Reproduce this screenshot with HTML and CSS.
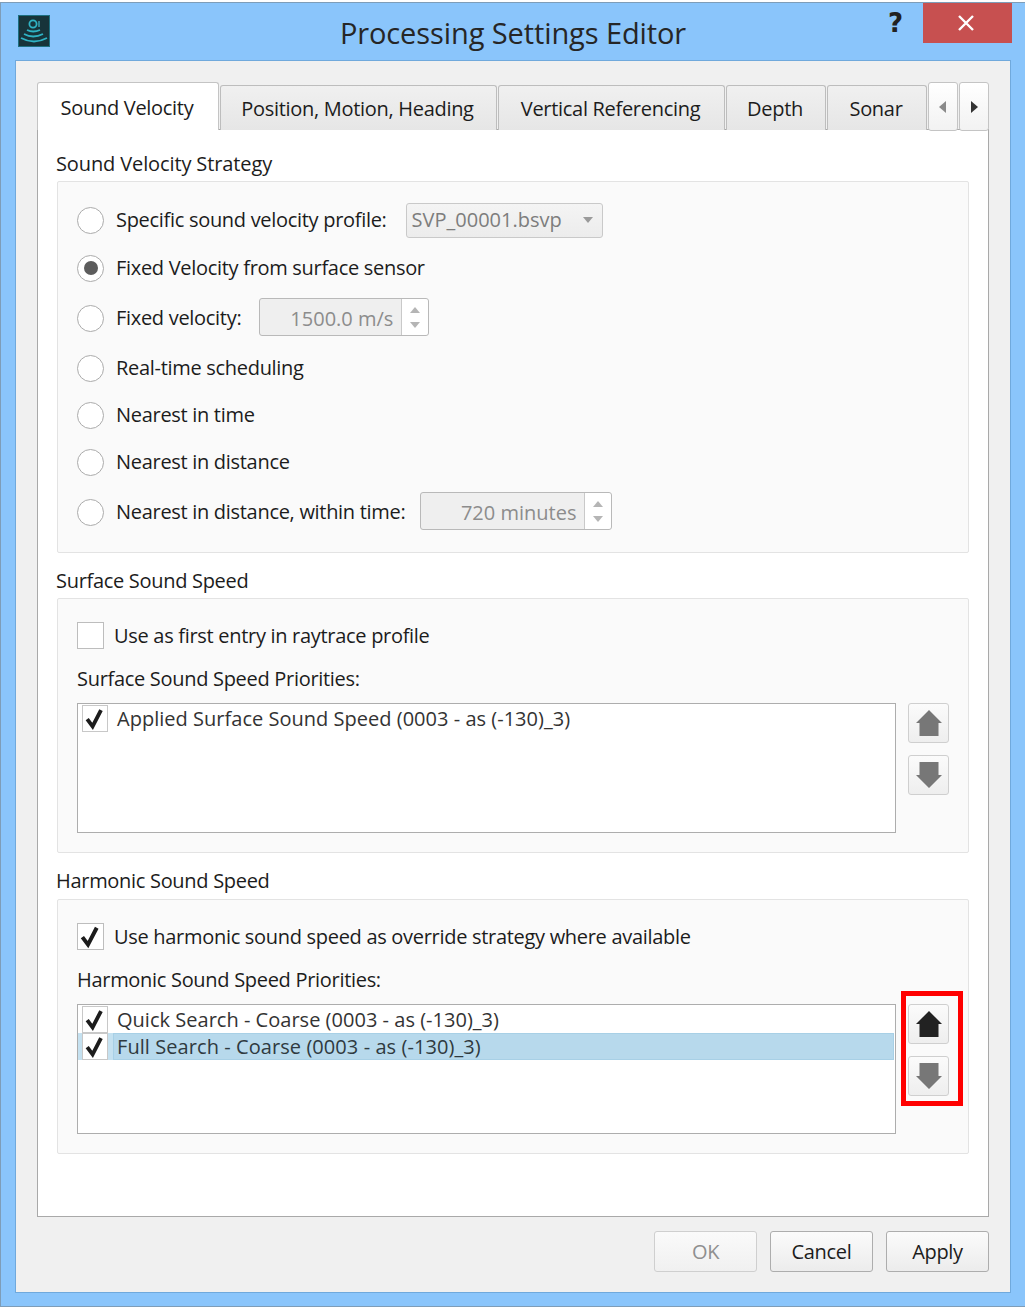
FILE: index.html
```html
<!DOCTYPE html>
<html lang="en">
<head>
<meta charset="utf-8">
<title>Processing Settings Editor</title>
<link rel="stylesheet" href="styles.css">
</head>
<body>
<div class="window">
  <header class="titlebar">
    <svg class="app-icon" viewBox="0 0 32 32" aria-hidden="true">
      <rect x="0.5" y="0.5" width="31" height="31" fill="#17343a" stroke="#1d6f80"/>
      <circle cx="15" cy="9" r="3.6" fill="none" stroke="#2fb3c4" stroke-width="1.8"/>
      <path d="M21 6v6" stroke="#2f8794" stroke-width="2"/>
      <path d="M9 15q6 3 13 0M6 19q9 5 19 0M3 23q13 7 26 0" fill="none" stroke="#2fb3c4" stroke-width="1.8"/>
    </svg>
    <h1 class="title">Processing Settings Editor</h1>
    <div class="win-controls">
      <span class="help">?</span>
      <button class="close" aria-label="Close">
        <svg viewBox="0 0 18 18" width="18" height="18"><path d="M2 2l14 14M16 2L2 16" stroke="#fff" stroke-width="2.4"/></svg>
      </button>
    </div>
  </header>

  <div class="client">
    <div class="tabbar">
      <div class="tab tab-active">Sound Velocity</div>
      <div class="tab tab-w1">Position, Motion, Heading</div>
      <div class="tab tab-w2">Vertical Referencing</div>
      <div class="tab tab-w3">Depth</div>
      <div class="tab tab-w3">Sonar</div>
      <div class="tab-scroll">
        <svg viewBox="0 0 8 12" width="8" height="12"><path d="M7 0v12L0 6z" fill="#8a8a8a"/></svg>
      </div>
      <div class="tab-scroll">
        <svg viewBox="0 0 8 12" width="8" height="12"><path d="M1 0v12l7-6z" fill="#333"/></svg>
      </div>
    </div>

    <main class="pane">
      <h2 class="group-title group-title-first">Sound Velocity Strategy</h2>
      <section class="group group-strategy">
        <div class="row">
          <span class="radio"></span>
          <span class="label">Specific sound velocity profile:</span>
          <div class="combo"><span>SVP_00001.bsvp</span><i class="combo-caret"></i></div>
        </div>
        <div class="row">
          <span class="radio radio-on"></span>
          <span class="label">Fixed Velocity from surface sensor</span>
        </div>
        <div class="row row-tall">
          <span class="radio"></span>
          <span class="label">Fixed velocity:</span>
          <div class="spin spin-a">
            <span class="spin-value">1500.0 m/s</span>
            <span class="spin-arrows"><i class="up"></i><i class="down"></i></span>
          </div>
        </div>
        <div class="row">
          <span class="radio"></span>
          <span class="label">Real-time scheduling</span>
        </div>
        <div class="row row-tight">
          <span class="radio"></span>
          <span class="label">Nearest in time</span>
        </div>
        <div class="row">
          <span class="radio"></span>
          <span class="label">Nearest in distance</span>
        </div>
        <div class="row row-tall">
          <span class="radio"></span>
          <span class="label">Nearest in distance, within time:</span>
          <div class="spin spin-b">
            <span class="spin-value">720 minutes</span>
            <span class="spin-arrows"><i class="up"></i><i class="down"></i></span>
          </div>
        </div>
      </section>

      <h2 class="group-title group-title-next">Surface Sound Speed</h2>
      <section class="group group-list">
        <div class="check-row">
          <span class="check"></span>
          <span class="label">Use as first entry in raytrace profile</span>
        </div>
        <div class="sub-label">Surface Sound Speed Priorities:</div>
        <div class="list-wrap">
          <div class="list">
            <div class="item">
              <span class="item-check"><svg viewBox="0 0 20 20"><path d="M3.500 10.500L8 16.500 15 3" fill="none" stroke="#1c1c1c" stroke-width="3.200"/></svg></span>
              <span class="item-text">Applied Surface Sound Speed (0003 - as (-130)_3)</span>
            </div>
          </div>
          <div class="movers">
            <button class="mover"><svg viewBox="0 0 26 26" width="26" height="26"><path d="M13 0L26 13h-3.500v13h-19V13H0z" fill="#777"/></svg></button>
            <button class="mover"><svg viewBox="0 0 26 26" width="26" height="26"><path d="M13 26L26 13h-3.500V0h-19v13H0z" fill="#777"/></svg></button>
          </div>
        </div>
      </section>

      <h2 class="group-title group-title-last">Harmonic Sound Speed</h2>
      <section class="group group-list">
        <div class="check-row">
          <span class="check"><svg viewBox="0 0 20 20"><path d="M3.500 10.500L8 16.500 15 3" fill="none" stroke="#1c1c1c" stroke-width="3.200"/></svg></span>
          <span class="label">Use harmonic sound speed as override strategy where available</span>
        </div>
        <div class="sub-label">Harmonic Sound Speed Priorities:</div>
        <div class="list-wrap">
          <div class="list">
            <div class="item">
              <span class="item-check"><svg viewBox="0 0 20 20"><path d="M3.500 10.500L8 16.500 15 3" fill="none" stroke="#1c1c1c" stroke-width="3.200"/></svg></span>
              <span class="item-text">Quick Search - Coarse (0003 - as (-130)_3)</span>
            </div>
            <div class="item item-selected">
              <span class="item-check"><svg viewBox="0 0 20 20"><path d="M3.500 10.500L8 16.500 15 3" fill="none" stroke="#1c1c1c" stroke-width="3.200"/></svg></span>
              <span class="item-text">Full Search - Coarse (0003 - as (-130)_3)</span>
            </div>
          </div>
          <div class="movers">
            <button class="mover"><svg viewBox="0 0 26 26" width="26" height="26"><path d="M13 0L26 13h-3.500v13h-19V13H0z" fill="#222"/></svg></button>
            <button class="mover"><svg viewBox="0 0 26 26" width="26" height="26"><path d="M13 26L26 13h-3.500V0h-19v13H0z" fill="#777"/></svg></button>
            <span class="callout"></span>
          </div>
        </div>
      </section>
    </main>

    <footer class="actions">
      <button class="btn" disabled>OK</button>
      <button class="btn">Cancel</button>
      <button class="btn">Apply</button>
    </footer>
  </div>
</div>
</body>
</html>
```
FILE: styles.css
```css
* { box-sizing: border-box; }
html, body { margin: 0; padding: 0; background: #fff; }
body { width: 1025px; height: 1310px; font-family: "Open Sans", "Noto Sans", sans-serif; color: #1c1c1c; padding-top: 2px; letter-spacing: -0.3px; }

.window {
  width: 1025px; height: 1305px;
  background: #8ac5fb;
  border: 1px solid #7e9db8;
  border-right: 0;
  padding: 0 14px 13px 14px;
  display: flex; flex-direction: column;
}

.titlebar { height: 57px; display: grid; grid-template-columns: 1fr auto 1fr; align-items: center; }
.app-icon { width: 32px; height: 32px; margin: -2px 0 0 3px; }
.title { grid-column: 2; margin: 2px 0 0; font-size: 29px; font-weight: 400; color: #262626; letter-spacing: -0.1px; }
.win-controls { grid-column: 3; justify-self: end; align-self: start; display: flex; margin-right: -1px; }
.help { font-family: "DejaVu Sans", sans-serif; font-weight: 700; font-size: 26px; line-height: 40px; width: 35px; color: #222; text-align: left; letter-spacing: 0; }
.close { width: 89px; height: 40px; padding: 0 4px 0 0; border: 0; background: #c75050; display: flex; align-items: center; justify-content: center; }

.client {
  flex: 1;
  background: #f0f0f0;
  border: 1px solid #70a9dc;
  padding: 21px 21px 0 21px;
  display: flex; flex-direction: column;
}

.tabbar { display: flex; align-items: flex-end; height: 48px; gap: 1px; position: relative; z-index: 1; margin-bottom: -1px; }
.tab {
  height: 45px; padding: 9px 2px 0 0;
  background: linear-gradient(#f0f0f0, #e6e6e6);
  border: 1px solid #bdbdbd; border-bottom: 0;
  border-radius: 3px 3px 0 0;
  font-size: 20px; text-align: center; line-height: 28px;
}
.tab-active { height: 48px; width: 182px; background: #fff; padding-top: 11px; border-color: #c4c4c4; }
.tab-w1 { width: 277px; }
.tab-w2 { width: 227px; }
.tab-w3 { width: 100px; }
.tab-scroll {
  width: 30px; height: 49px; margin-bottom: -1px;
  border: 1px solid #c4c4c4; border-radius: 3px;
  background: linear-gradient(#fff, #f2f2f2);
  display: flex; align-items: center; justify-content: center;
}

.pane {
  height: 1088px;
  background: #fff;
  border: 1px solid #a9a9a9;
  padding: 19px 19px 0;
}
.group-title { margin: 0 0 0 -1px; padding-top: 1px; font-size: 20px; font-weight: 400; line-height: 28px; height: 32px; }
.group-title-first { letter-spacing: -0.12px; }
.group-title-next { margin-top: 13px; }
.group-title-last { margin-top: 13px; height: 33px; }

.group { background: #fafafa; border: 1px solid #e3e3e3; border-radius: 2px; padding: 0 19px; }
.group-strategy { height: 372px; padding-top: 14px; }
.group-list { height: 255px; padding-top: 23px; }

.row { display: flex; align-items: center; height: 48px; }
.row-tall { height: 52px; }
.row-tight { height: 46px; }
.label { font-size: 20px; line-height: 28px; white-space: nowrap; }

.radio {
  width: 27px; height: 27px; border-radius: 50%; flex: none;
  margin-right: 12px;
  border: 1px solid #ababab;
  background: #fff;
  display: flex; align-items: center; justify-content: center;
}
.radio-on::after { content: ""; width: 14px; height: 14px; border-radius: 50%; background: #5c5c5c; }

.combo {
  margin-left: 19px; width: 197px; height: 35px;
  border: 1px solid #c9c9c9; border-radius: 3px;
  background: linear-gradient(#f4f4f4, #ececec);
  color: #7d7d7d; font-size: 20px; letter-spacing: 0;
  display: flex; align-items: center; justify-content: space-between;
  padding: 0 9px 2px 5px;
}
.combo-caret { width: 0; height: 0; border: 5px solid transparent; border-top: 6px solid #9a9a9a; border-bottom: 0; margin-top: 2px; }

.spin {
  height: 38px; margin-bottom: 2px;
  border: 1px solid #b9b9b9; border-radius: 3px;
  background: #efefef;
  display: flex; color: #8c8c8c; font-size: 20px; letter-spacing: 0;
}
.spin-a { width: 170px; margin-left: 18px; }
.spin-b { width: 192px; margin-left: 15px; }
.spin-value { flex: 1; text-align: right; line-height: 40px; padding-right: 8px; white-space: nowrap; }
.spin-arrows { width: 27px; background: #fff; border-left: 1px solid #c9c9c9; border-radius: 0 3px 3px 0; display: flex; flex-direction: column; align-items: center; justify-content: space-between; padding: 8px 0 7px; }
.spin-arrows i { width: 0; height: 0; border-left: 5.500px solid transparent; border-right: 5.500px solid transparent; }
.spin-arrows .up { border-bottom: 6px solid #b5b5b5; }
.spin-arrows .down { border-top: 6px solid #b5b5b5; }

.check-row { display: flex; align-items: center; height: 27px; }
.check { width: 27px; height: 27px; flex: none; margin-right: 10px; background: #fff; border: 1px solid #bdbdbd; display: block; }
.check svg, .item-check svg { display: block; width: 100%; height: 100%; }

.sub-label { font-size: 20px; line-height: 28px; margin-top: 16px; }

.list-wrap { display: flex; margin-top: 10px; }
.list { width: 820px; height: 130px; background: #fff; border: 1px solid #adadad; padding: 1px 1px 0 4px; }
.item { display: flex; align-items: center; height: 27px; }
.item-check { width: 26px; height: 27px; flex: none; background: #fff; border: 1px solid #c8c8c8; }
.item-text { font-size: 20px; margin-left: 9px; line-height: 27px; white-space: nowrap; color: #333; letter-spacing: 0.02px; }
.item-selected { margin-left: -4px; padding-left: 4px; background: #c5e1f0; }
.item-selected .item-text { flex: 1; height: 27px; margin-left: 5px; padding: 0 0 0 3px; background: #b7d9ec; border: 1px solid #a8d0e6; color: #2f3a40; line-height: 25px; letter-spacing: 0.07px; }

.movers { position: relative; margin-left: 12px; display: flex; flex-direction: column; gap: 12px; align-self: flex-start; }
.mover {
  width: 41px; height: 40px; padding: 0;
  border: 1px solid #cfcfcf; border-radius: 3px;
  background: linear-gradient(#fbfbfb, #eeeeee);
  display: flex; align-items: center; justify-content: center;
}
.callout { position: absolute; left: -7px; top: -13px; width: 62px; height: 115px; border: 5px solid #f00; }

.actions { flex: 1; display: flex; justify-content: flex-end; gap: 13px; padding-top: 14px; }
.btn {
  width: 103px; height: 41px; padding: 0;
  border: 1px solid #adadad; border-radius: 3px;
  background: linear-gradient(#fbfbfb, #ececec);
  font: 400 20px "Open Sans", "Noto Sans", sans-serif; letter-spacing: -0.3px; color: #1c1c1c;
}
.btn:disabled { color: #8f8f8f; border-color: #cfcfcf; background: linear-gradient(#fafafa, #f0f0f0); }
```
